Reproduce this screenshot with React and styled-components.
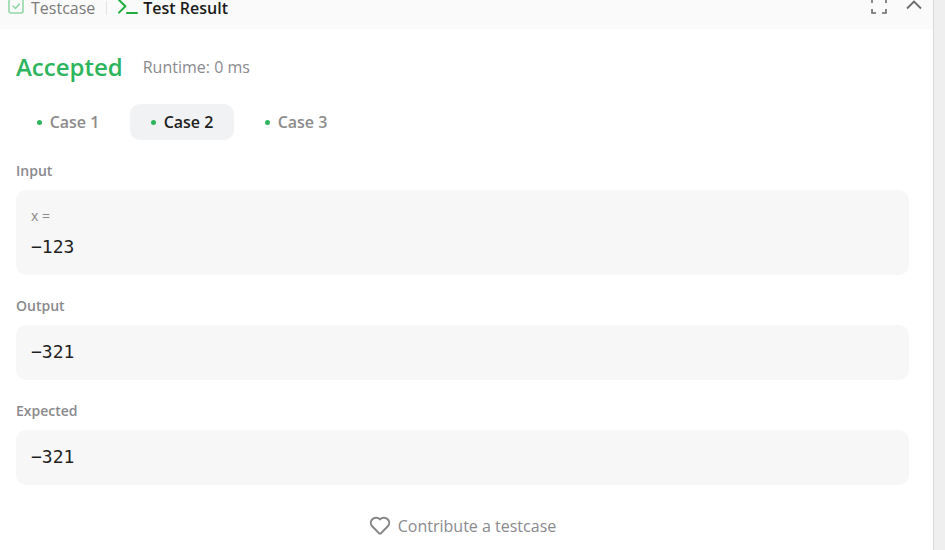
import { useState } from 'react';
import styled, { createGlobalStyle } from 'styled-components';


// Styled components

const GlobalStyle = createGlobalStyle`
    * {
        box-sizing: border-box;
    }

    body {
        margin: 0;
        background: #fff;
        color: #262626;
        font-family: "Open Sans", "Noto Sans", sans-serif;
    }

    button {
        border: none;
        padding: 0;
        background: transparent;
        color: inherit;
        font: inherit;
        cursor: pointer;
    }
`;

const Page = styled.div`
    display: flex;
    min-height: 100vh;
`;

const Panel = styled.main`
    flex: 1;
    min-width: 0;
`;

const Gutter = styled.aside`
    width: 12px;
    border-left: 1px solid #d9d9d9;
    background: #efefef;
`;

const PanelHeader = styled.header`
    display: flex;
    justify-content: space-between;
    padding: 0 10px 13px 6px;
    background: #fafafa;
`;

const HeaderGroup = styled.div`
    display: flex;
    align-items: center;
    gap: ${({ $gap }) => $gap}px;
    height: 16px;
`;

const HeaderTab = styled.button`
    display: flex;
    align-items: center;
    gap: 5px;
    height: 16px;
    font-size: 16px;
    line-height: 16px;
    font-weight: ${({ $active }) => ($active ? 600 : 400)};
    color: ${({ $active }) => ($active ? '#1a1a1a' : '#7a7a7a')};
`;

const Divider = styled.span`
    width: 1px;
    height: 14px;
    background: #e5e5e5;
`;

const IconButton = styled.button`
    display: flex;
    color: #6b6b6b;
`;

const PanelBody = styled.div`
    padding: 20px 24px 0 16px;
`;

const Summary = styled.div`
    display: flex;
    align-items: center;
    gap: 20px;
    height: 36px;
`;

const Status = styled.h1`
    margin: 0;
    font-size: 24px;
    line-height: 36px;
    font-weight: 600;
    color: #2db55d;
`;

const Runtime = styled.span`
    font-size: 16px;
    line-height: 36px;
    color: #8a8a8e;
`;

const CaseTabs = styled.div`
    display: flex;
    gap: 10px;
    margin-top: 19px;
`;

const CaseTab = styled.button`
    display: flex;
    align-items: center;
    justify-content: center;
    gap: 8px;
    width: 104px;
    height: 36px;
    border-radius: 10px;
    font-size: 16px;
    font-weight: 600;
    background: ${({ $active }) => ($active ? '#f1f2f4' : 'transparent')};
    color: ${({ $active }) => ($active ? '#1f1f1f' : '#8c8c8c')};
`;

const Dot = styled.span`
    width: 5px;
    height: 5px;
    border-radius: 50%;
    background: #2db55d;
`;

const Field = styled.section`
    margin-top: 20px;
`;

const FieldLabel = styled.h2`
    margin: 0 0 8px;
    font-size: 14px;
    line-height: 22px;
    font-weight: 600;
    color: #8a8a8e;
`;

const ValueBox = styled.div`
    padding: 14px 15px 16px;
    border-radius: 10px;
    background: #f7f7f7;
`;

const VariableName = styled.div`
    margin-bottom: 6px;
    font-size: 14px;
    line-height: 24px;
    color: #8a8a8a;
`;

const Value = styled.div`
    font-family: "DejaVu Sans Mono", monospace;
    font-size: 18px;
    line-height: 25px;
    color: #1f1f1f;
`;

const Contribute = styled.button`
    display: flex;
    align-items: center;
    gap: 7px;
    margin: 29px auto 0;
    font-size: 16px;
    line-height: 24px;
    color: #8a8a8e;
`;


// Icons

function CheckIcon() {
    return (
        <svg width="20" height="20" viewBox="0 0 20 20" fill="none" stroke="#93d9a8" strokeWidth="1.6" strokeLinecap="round" strokeLinejoin="round">
            <rect x="3" y="0.5" width="14" height="14.5" rx="2" />
            <path d="M7 8l2.4 2.4L13.4 6" />
        </svg>
    );
}

function TerminalIcon() {
    return (
        <svg width="20" height="20" viewBox="0 0 20 20" fill="none" stroke="#1fae3d" strokeWidth="2" strokeLinecap="round" strokeLinejoin="round">
            <path d="M1 2l6.4 6.2L1 14.6" />
            <path d="M9 15h10" />
        </svg>
    );
}

function ExpandIcon() {
    return (
        <svg width="18" height="18" viewBox="0 0 18 18" fill="none" stroke="currentColor" strokeWidth="1.6">
            <path d="M2 4V0h4M12 0h4v4M16 10v4h-4M6 14H2v-4" />
        </svg>
    );
}

function ChevronIcon() {
    return (
        <svg width="18" height="18" viewBox="0 0 18 18" fill="none" stroke="currentColor" strokeWidth="1.8">
            <path d="M2 9.500l7-7 7 7" />
        </svg>
    );
}

function HeartIcon() {
    return (
        <svg width="22" height="20" viewBox="0 0 22 20" fill="none" stroke="#858585" strokeWidth="2" strokeLinejoin="round">
            <path d="M11 3.4C9 1.2 5.4 1.1 3.3 3.2C1.3 5.3 1.4 8.4 3.2 10.3L9.7 16.9C10.5 17.6 11.5 17.6 12.3 16.9L18.8 10.3C20.6 8.4 20.7 5.3 18.7 3.2C16.6 1.1 13 1.2 11 3.4Z" />
        </svg>
    );
}


const CASES = [
    { name: 'Case 1', input: '123', result: '321' },
    { name: 'Case 2', input: '−123', result: '−321' },
    { name: 'Case 3', input: '120', result: '21' },
];


function App() {
    const [activeCase, setActiveCase] = useState(1);

    const { input, result } = CASES[activeCase];

    return (
        <Page>
            <GlobalStyle />
            <Panel>
                <PanelHeader>
                    <HeaderGroup $gap={11}>
                        <HeaderTab type="button">
                            <CheckIcon />
                            Testcase
                        </HeaderTab>
                        <Divider />
                        <HeaderTab type="button" $active>
                            <TerminalIcon />
                            Test Result
                        </HeaderTab>
                    </HeaderGroup>
                    <HeaderGroup $gap={17}>
                        <IconButton type="button" aria-label="Maximize">
                            <ExpandIcon />
                        </IconButton>
                        <IconButton type="button" aria-label="Fold">
                            <ChevronIcon />
                        </IconButton>
                    </HeaderGroup>
                </PanelHeader>

                <PanelBody>
                    <Summary>
                        <Status>Accepted</Status>
                        <Runtime>Runtime: 0 ms</Runtime>
                    </Summary>

                    <CaseTabs>
                        {CASES.map((item, index) => (
                            <CaseTab
                                key={item.name}
                                type="button"
                                $active={index === activeCase}
                                onClick={() => setActiveCase(index)}
                            >
                                <Dot />
                                {item.name}
                            </CaseTab>
                        ))}
                    </CaseTabs>

                    <Field>
                        <FieldLabel>Input</FieldLabel>
                        <ValueBox>
                            <VariableName>x =</VariableName>
                            <Value>{input}</Value>
                        </ValueBox>
                    </Field>
                    <Field>
                        <FieldLabel>Output</FieldLabel>
                        <ValueBox>
                            <Value>{result}</Value>
                        </ValueBox>
                    </Field>
                    <Field>
                        <FieldLabel>Expected</FieldLabel>
                        <ValueBox>
                            <Value>{result}</Value>
                        </ValueBox>
                    </Field>

                    <Contribute type="button">
                        <HeartIcon />
                        Contribute a testcase
                    </Contribute>
                </PanelBody>
            </Panel>
            <Gutter />
        </Page>
    );
}

export default App;
